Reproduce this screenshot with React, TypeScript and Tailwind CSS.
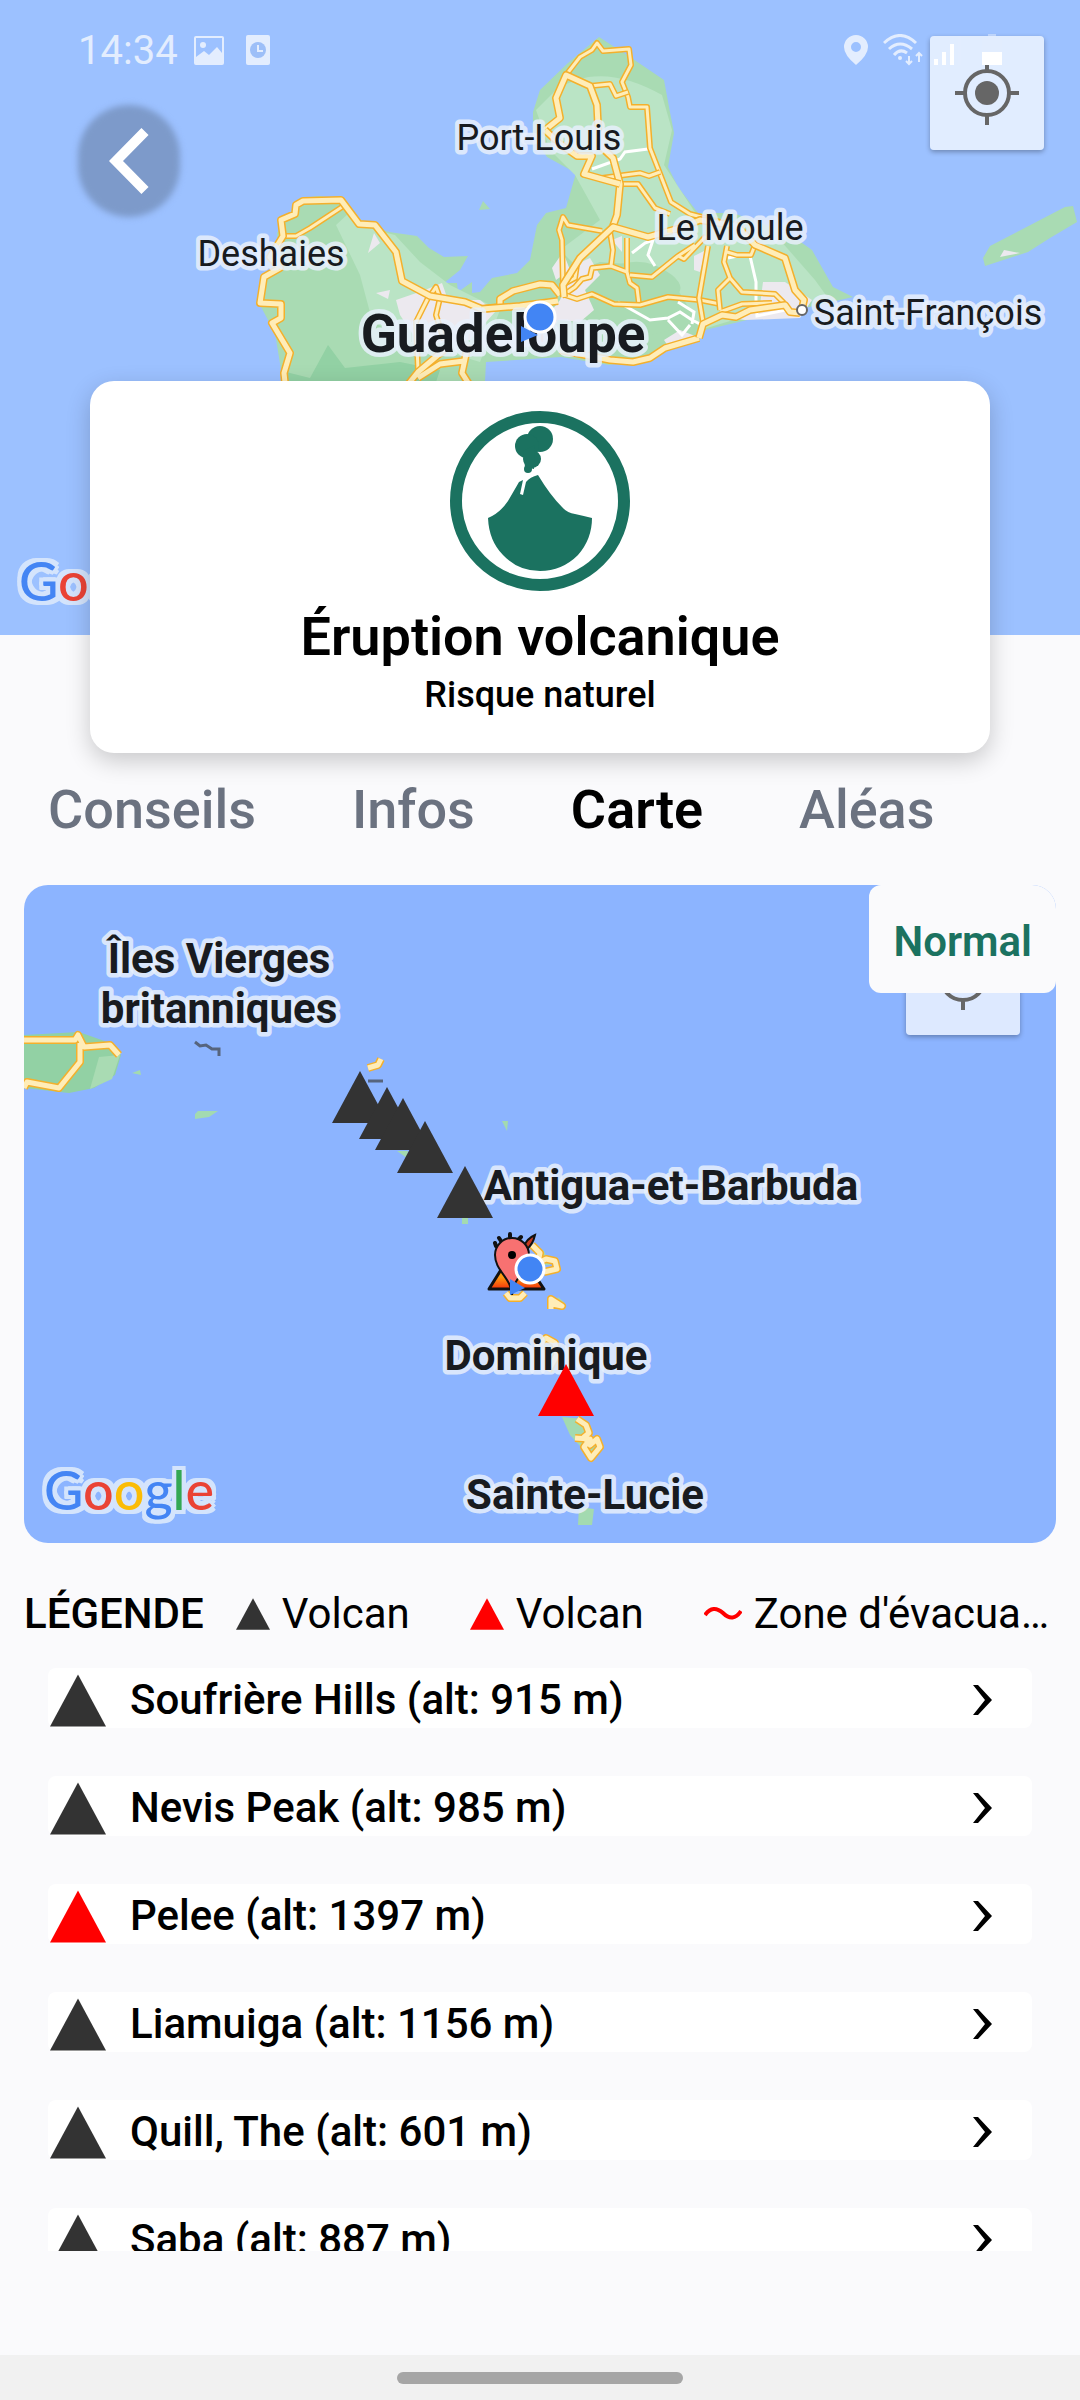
import type { ReactNode } from 'react'
import clsx from 'clsx'

type Volcano = {
  name: string
  alt: number
  active?: boolean
}

const volcanoes: Volcano[] = [
  { name: 'Soufrière Hills', alt: 915 },
  { name: 'Nevis Peak', alt: 985 },
  { name: 'Pelee', alt: 1397, active: true },
  { name: 'Liamuiga', alt: 1156 },
  { name: 'Quill, The', alt: 601 },
  { name: 'Saba', alt: 887 },
]

const tabs = ['Conseils', 'Infos', 'Carte', 'Aléas']

// main roads of Guadeloupe
const mainRoads = [
  'M286 392 L284 373 L290 353 L272 323 L281 318 L281 304 L260 303 L264 277 L280 268 L270 257 L283 236 L281 220 L295 214 L296 205 L303 201 L341 200 L359 224 L375 225 L396 252 L402 281 L430 296 L465 302 L482 309 L500 307 L500 299 L513 291 L540 284 L552 285 L560 295',
  'M402 392 L418 372 L444 350 M418 378 L440 364 L464 361 M468 345 L462 373 L474 392',
  'M482 309 L520 306 L558 301',
  'M545 130 L560 118 L556 98 L566 75 L590 86 L597 105 L599 145 L613 158 L620 184 L617 215 L613 226',
  'M545 130 L560 144 L577 156 L592 156 L584 174 L620 184',
  'M564 297 L563 285 L580 258 L613 227 L648 237 L680 228 L700 220 L737 226 L755 245 L785 258 L795 290 L804 300 L801 313',
  'M699 338 L665 348 L650 358 L633 362 L610 360 L560 350',
  'M699 338 L703 324 L722 315 L736 317 L750 310 L785 305 L790 312 L800 313',
]

const minorRoads = [
  'M284 236 L296 236 L310 228 L345 205',
  'M430 296 L436 287 L440 298 L436 315 L444 340 M428 298 L416 322 L418 370',
  'M566 75 L580 57 L592 50 L597 43 L603 51 L629 49 L631 65 L622 82 L628 97 L630 107 L647 107 L650 148 L671 202 L690 214 L720 222',
  'M590 86 L610 84 L616 96 L628 92',
  'M620 184 L638 184 L655 208 L670 214',
  'M602 178 L640 173 L649 176 L660 172',
  'M563 285 L562 240 L559 230 L563 217 L568 225 L602 231',
  'M562 285 L575 278 L577 264 M562 296 L575 287 L582 279 L590 277 L592 268 L611 266 L613 250 L610 232 M611 266 L627 272 L627 238 M627 272 L630 283 L637 288 L639 304',
  'M630 275 L652 277 L678 256 L684 259 L706 236 M678 256 L695 245',
  'M562 294 L577 299 L592 294 L614 304 L640 305 L668 297 L700 300 L720 304',
  'M708 246 L699 298 L703 322',
  'M727 246 L724 262 L730 278 L718 290 L720 310 M730 278 L742 292 L775 294 L784 303 M727 252 L737 255 L751 255 L755 245 M720 312 L742 304 L772 303',
]

const islandRoads = [
  'M0 155 L51 155 L54 150 L60 162 L86 160 L95 170 M56 158 L56 177 L35 203 L3 197 L0 203',
  'M344 183 L354 180 L357 174',
  'M508 360 L516 368 L514 378 L522 374 L531 376 L533 384 L520 387',
  'M482 408 L486 413 L496 413 L501 408',
  'M527 424 L527 414 L538 421 L528 419',
  'M512 462 L522 453 L531 458 L533 470 L524 486',
  'M553 534 L562 540 L565 548 L560 552 L566 560 L573 554 L576 562 L567 573 L560 562 L566 554 L551 553',
]

const Road = ({ d, width = 7 }: { d: string; width?: number }) => (
  <g fill="none" strokeLinejoin="round">
    <path d={d} stroke="#f4b02c" strokeWidth={width} />
    <path d={d} stroke="#ffedb8" strokeWidth={width - 3} />
  </g>
)

type LabelProps = {
  x: number
  y: number
  bold?: boolean
  size?: number
  children: ReactNode
}

const Label = ({ x, y, bold, size = 36, children }: LabelProps) => (
  <text
    x={x}
    y={y}
    textAnchor="middle"
    fontSize={size}
    fontWeight={bold ? 700 : 400}
    fill="#181b20"
    stroke="#e8f0fc"
    strokeOpacity="0.85"
    strokeWidth="9"
    strokeLinejoin="round"
    paintOrder="stroke"
  >
    {children}
  </text>
)

const Triangle = ({ active, className }: { active?: boolean; className?: string }) => (
  <svg viewBox="0 0 56 52" className={clsx('shrink-0', className)} aria-hidden="true">
    <path d="M28 0 L56 52 H0 Z" fill={active ? '#ff0000' : '#333333'} />
  </svg>
)

const GoogleLogo = ({ className }: { className?: string }) => (
  <div
    className={clsx(
      'absolute font-["Lato","Open_Sans",sans-serif] text-[54px] font-medium leading-[64px]',
      '[filter:drop-shadow(4px_0_0_#d4e4fc)_drop-shadow(-4px_0_0_#d4e4fc)_drop-shadow(0_4px_0_#d4e4fc)_drop-shadow(0_-4px_0_#d4e4fc)]',
      className
    )}
  >
    <span className="text-[#4485f4]">G</span>
    <span className="text-[#ea4335]">o</span>
    <span className="text-[#fbbc05]">o</span>
    <span className="text-[#4485f4]">g</span>
    <span className="text-[#34a853]">l</span>
    <span className="text-[#ea4335]">e</span>
  </div>
)

const LocateButton = ({ className }: { className?: string }) => (
  <button
    type="button"
    aria-label="Ma position"
    className={clsx(
      'absolute flex h-[114px] w-[114px] items-center justify-center rounded bg-white/70 shadow-[0_2px_5px_rgba(0,0,0,0.3)]',
      className
    )}
  >
    <svg viewBox="0 0 64 64" className="h-16 w-16" fill="none" stroke="#666" strokeWidth="4">
      <circle cx="32" cy="32" r="22" />
      <circle cx="32" cy="32" r="12" fill="#666" stroke="none" />
      <path d="M32 0 V10 M32 54 V64 M0 32 H10 M54 32 H64" />
    </svg>
  </button>
)

const StatusBar = () => (
  <div className="absolute inset-x-0 top-0 flex h-[100px] items-center justify-between pl-[78px] pr-[78px] text-[#e3edfe]">
    <div className="flex items-center">
      <span className="pt-[2px] text-[40px] leading-[48px]">14:34</span>
      <svg viewBox="0 0 30 29" className="ml-4 h-[29px] w-[30px]" fill="currentColor">
        <path
          fillRule="evenodd"
          d="M2 0 H28 Q30 0 30 2 V27 Q30 29 28 29 H2 Q0 29 0 27 V2 Q0 0 2 0 Z M2 2 V21 L10 15 L15 19 L23 11 L28 17 V2 Z"
        />
        <circle cx="9" cy="9" r="3" />
      </svg>
      <svg viewBox="0 0 24 30" className="ml-[22px] h-[30px] w-6">
        <rect width="24" height="30" rx="2" fill="currentColor" />
        <circle cx="12" cy="15" r="8" fill="#9dbff8" />
        <path d="M12 10 V16 H17" stroke="currentColor" strokeWidth="2" fill="none" />
      </svg>
    </div>
    <div className="flex items-center">
      <svg viewBox="0 0 24 30" className="h-[30px] w-6" fill="currentColor">
        <path fillRule="evenodd" d="M12 0 A12 12 0 0 1 24 12 Q24 20 12 30 Q0 20 0 12 A12 12 0 0 1 12 0 Z M12 7 A5 5 0 1 0 12 17 A5 5 0 1 0 12 7 Z" />
      </svg>
      <svg viewBox="0 0 40 32" className="ml-[15px] h-8 w-10" fill="none" stroke="currentColor" strokeWidth="3">
        <path d="M1 9 Q17 -6 33 9 M6 15 Q17 5 29 15 M11 21 Q17 14 24 19" />
        <circle cx="17" cy="24" r="2" fill="currentColor" stroke="none" />
        <path d="M26 22 V30 M23 27 L26 30 L29 27 M36 28 V19 M33 22 L36 19 L39 22" strokeWidth="2" />
      </svg>
      <svg viewBox="0 0 28 30" className="ml-[11px] h-[30px] w-7" fill="currentColor">
        <path d="M0 24 h4 v6 h-4z M8 17 h4 v13 h-4z M16 9 h4 v21 h-4z" className="fill-white" />
        <path d="M24 1 h3 v29 h-3z" opacity="0.4" />
      </svg>
      <svg viewBox="0 0 20 32" className="ml-[20px] h-8 w-5" fill="currentColor">
        <path d="M6 0 h8 v4 h6 v14 h-20 v-14 h6z" opacity="0.5" />
        <path d="M0 18 h20 v13 h-20z" className="fill-white" />
      </svg>
    </div>
  </div>
)

const HeaderMap = () => (
  <header className="relative h-[635px] shrink-0 overflow-hidden bg-[#9cc1ff]">
    <svg viewBox="0 0 1080 635" preserveAspectRatio="xMidYMid slice" className="h-full w-full">
      <path
        fill="#a9dbb3"
        d="M300 198 L320 196 L341 200 L358 222 L389 232 L417 236 L429 248 L444 257 L468 256 L460 270 L444 283 L457 283 L458 292 L472 282 L472 293 L480 292 L492 278 L517 273 L530 260 L537 225 L546 213 L566 208 L576 173 L547 157 L533 135 L533 112 L540 90 L568 63 L599 37 L630 57 L664 80 L669 107 L674 133 L668 167 L678 187 L698 213 L733 213 L788 233 L812 250 L833 287 L853 297 L809 307 L747 320 L705 330 L698 340 L654 352 L633 360 L609 365 L561 357 L486 362 L484 400 H286 L275 333 L260 305 L267 277 L279 253 L277 233 Z"
      />
      <path
        fill="#bae4c5"
        d="M336 225 L350 212 L375 230 L395 235 L420 262 L450 285 L500 310 L480 362 L440 350 L400 340 L372 320 L360 275 Z M556 90 Q600 60 662 95 L672 130 L664 165 L700 220 L780 240 L815 280 L828 298 L740 318 L700 330 L690 310 L672 280 L640 265 L600 262 L580 270 L560 250 L600 220 L575 175 L550 150 L536 110 Z"
      />
      <path fill="#a9dbb3" d="M602 272 Q640 250 672 275 Q690 290 670 300 L690 325 L650 335 L600 310 L580 300 Z" />
      <path fill="#92d1a4" d="M328 345 L345 368 L400 362 L440 370 L430 400 H284 L286 372 L310 378 Z" />
      <path
        fill="#ece9ef"
        d="M374 233 L368 253 L380 243 Z M376 293 L390 290 L388 299 Z M396 300 L425 290 L442 283 L448 300 L480 300 L495 312 L470 340 L420 345 L400 315 Z M575 265 L590 258 L600 275 L585 290 L594 310 L580 322 L558 320 L545 345 L500 350 L490 340 L540 325 L560 300 Z M552 268 L563 252 L570 270 L556 280 Z M694 256 L706 250 L700 272 L694 270 Z M763 282 L785 282 L812 300 L800 318 L745 320 L730 318 L760 305 Z M612 240 L622 236 L622 252 Z M664 340 L680 330 L695 336 L668 346 Z"
      />
      <path d="M479 210 L483 201 L490 209 Z" fill="#a9dbb3" />
      <path d="M983 258 L990 246 L1065 207 L1073 206 L1077 222 L1050 238 L1028 252 L985 266 Z" fill="#a9dbb3" />
      <path d="M1000 257 L1004 250 L1020 253 Z" fill="#ece9ef" />
      <g fill="none" stroke="#ffffff" strokeWidth="3">
        <path d="M592 169 L620 159 L625 152 L648 149 M632 253 L645 243 L653 240 L648 255 L655 266 M750 256 L756 282 L756 300 L757 316 L790 309" />
        <path d="M618 302 L650 320 L668 318 L680 312 L692 320 L700 324 M668 320 L682 335 L690 325 M678 302 L694 312 L692 324 M728 258 L742 255" />
      </g>
      {minorRoads.map((d) => (
        <Road key={d} d={d} width={6} />
      ))}
      {mainRoads.map((d) => (
        <Road key={d} d={d} width={8} />
      ))}
      <circle cx="802" cy="310" r="5" fill="#fff" stroke="#666" strokeWidth="2" />
      <Label x={539} y={150}>Port-Louis</Label>
      <Label x={271} y={266}>Deshaies</Label>
      <Label x={730} y={240}>Le Moule</Label>
      <Label x={928} y={325}>Saint-François</Label>
      <Label x={503} y={352} bold size={53}>Guadeloupe</Label>
      <path d="M521 326 V342 L538 335 Z" fill="#4285f4" />
      <circle cx="540" cy="317" r="15" fill="#4285f4" stroke="#fff" strokeWidth="3" />
    </svg>
    <GoogleLogo className="left-[19px] top-[549px]" />
    <LocateButton className="right-9 top-9" />
    <StatusBar />
    <button
      type="button"
      aria-label="Retour"
      className="absolute left-[76px] top-[103px] flex h-[116px] w-[106px] items-center justify-center"
    >
      <span className="absolute inset-[2px] rounded-full bg-[#7d9aca] blur-[3px]" />
      <svg viewBox="0 0 40 66" className="relative h-[66px] w-10" fill="none" stroke="#fff" strokeWidth="10">
        <path d="M36 3.500 L7 33 L36 62.500" />
      </svg>
    </button>
  </header>
)

const VolcanoLogo = () => (
  <svg viewBox="0 0 180 180" className="h-[180px] w-[180px]" fill="#1b7260" aria-hidden="true">
    <circle cx="90" cy="90" r="84" fill="none" stroke="#1b7260" strokeWidth="12" />
    <circle cx="90" cy="28" r="13" />
    <circle cx="77" cy="35" r="12" />
    <circle cx="82" cy="48" r="9" />
    <circle cx="78" cy="58" r="4" />
    <path d="M73 40 L85 34 L84 58 L75 56 Z" />
    <path d="M88 64 Q100 84 112 96 Q117 102 125 103 Q134 105 142 107 Q142 128 128 144 Q112 160 90 160 Q68 160 53 144 Q39 130 38 107 Q50 102 58 90 Q65 78 69 71 L73 69 L70 83 L73 84 L76 71 Q80 66 88 64 Z" />
  </svg>
)

const HazardCard = () => (
  <section className="relative mx-[90px] -mt-[254px] flex h-[372px] shrink-0 flex-col items-center rounded-3xl bg-white pt-[30px] shadow-[0_8px_24px_rgba(0,0,0,0.2)]">
    <VolcanoLogo />
    <h1 className="mt-4 text-[54px] font-semibold leading-[60px]">Éruption volcanique</h1>
    <p className="mt-1 text-[36px] font-medium leading-[48px]">Risque naturel</p>
  </section>
)

const Marker = ({ x, y, active }: { x: number; y: number; active?: boolean }) => (
  <path d="M28 0 L56 52 H0 Z" fill={active ? '#ff0000' : '#333'} transform={`translate(${x - 28} ${y})`} />
)

const VolcanoMap = () => (
  <section className="relative mx-6 mt-10 h-[658px] shrink-0 overflow-hidden rounded-3xl bg-[#8cb4ff]">
    <svg viewBox="0 0 1032 658" preserveAspectRatio="xMidYMid slice" className="h-full w-full">
      <path d="M0 150 L55 147 L86 158 L97 170 L91 190 L70 203 L45 208 L0 203 Z" fill="#92d1a4" />
      <path d="M75 172 L96 170 L88 194 L66 204 Z" fill="#a9dbb3" />
      <path
        fill="#a3dab0"
        d="M108 188 L116 185 L117 190 Z M171 229 L174 226 L194 226 L185 232 L171 234 Z M478 236 L484 236 L483 246 Z M373 266 L384 266 L383 273 Z M438 333 H444 V339 H438 Z M512 360 L520 366 L526 380 L510 380 Z M534 412 L541 418 L530 424 Z M538 532 L560 534 L572 560 L566 572 L546 550 Z M514 458 L532 462 L530 488 L520 484 Z M555 622 L570 624 L568 640 L554 640 Z"
      />
      <g fill="none" stroke="#56647d" strokeWidth="3">
        <path d="M171 157 L176 161 L182 160 L188 164 L195 164 V171 M344 196 H359" />
      </g>
      {islandRoads.map((d) => (
        <Road key={d} d={d} width={8} />
      ))}
      <Label x={195} y={88} bold size={42}>Îles Vierges</Label>
      <Label x={195} y={138} bold size={42}>britanniques</Label>
      <Label x={647} y={315} bold size={42}>Antigua-et-Barbuda</Label>
      <Label x={522} y={485} bold size={42}>Dominique</Label>
      <Label x={561} y={624} bold size={42}>Sainte-Lucie</Label>
      <Marker x={336} y={186} />
      <Marker x={363} y={202} />
      <Marker x={379} y={213} />
      <Marker x={401} y={236} />
      <Marker x={441} y={281} />
      <Marker x={542} y={479} active />
      <defs>
        <linearGradient id="lava" x1="0" y1="0" x2="0" y2="1">
          <stop offset="0.5" stopColor="#ff9a10" />
          <stop offset="1" stopColor="#f2330c" />
        </linearGradient>
      </defs>
      <path d="M465 404 L480 380 L504 380 L520 404 Z" fill="url(#lava)" stroke="#111" strokeWidth="3" strokeLinejoin="round" />
      <path d="M500 362 Q502 354 511 350 Q509 359 503 364 Z" fill="#c63a20" stroke="#111" strokeWidth="2" />
      <path d="M472 361 L471 358 M477 356 L475 353 M486 352 L486 349 M495 354 L497 352" stroke="#111" strokeWidth="4" strokeLinecap="round" />
      <path d="M488 410 C487 392 471 386 471 370 A17 17 0 0 1 505 370 C505 386 489 392 488 410 Z" fill="#f87171" stroke="#111" strokeWidth="2" />
      <circle cx="488" cy="370" r="4" fill="#000" />
      <path d="M486 394 V410 L501 403 Z" fill="#4285f4" />
      <circle cx="506" cy="384" r="14" fill="#4285f4" stroke="#fff" strokeWidth="3" />
    </svg>
    <GoogleLogo className="left-[20px] top-[573px]" />
    <LocateButton className="right-9 top-9" />
    <button
      type="button"
      className="absolute right-0 top-0 h-[108px] rounded-xl bg-[#fafafc] px-6 pt-1 text-[42px] font-semibold text-[#1b7260]"
    >
      Normal
    </button>
  </section>
)

const Legend = () => (
  <div className="flex h-[125px] shrink-0 items-center px-6 pt-4 text-[42px] leading-[48px]">
    <span className="font-medium">LÉGENDE</span>
    <ul className="flex min-w-0 flex-1 items-center">
      <li className="ml-8 flex items-center gap-3">
        <Triangle className="h-8 w-[34px]" />
        Volcan
      </li>
      <li className="ml-[60px] flex items-center gap-3">
        <Triangle active className="h-8 w-[34px]" />
        Volcan
      </li>
      <li className="ml-[60px] flex min-w-0 items-center gap-3">
        <svg viewBox="0 0 38 16" className="h-4 w-[38px] shrink-0" fill="none" stroke="#f00" strokeWidth="4">
          <path d="M1 9 Q9 -2 19 7 Q29 17 37 5" />
        </svg>
        <span className="truncate">Zone d'évacuation</span>
      </li>
    </ul>
  </div>
)

const VolcanoRow = ({ name, alt, active }: Volcano) => (
  <li>
    <a href={`#${name}`} className="flex h-[60px] items-center rounded-lg bg-white pl-[2px] pr-10">
      <Triangle active={active} className="mt-1 h-[53px] w-14" />
      <span className="ml-6 mt-1 flex-1 text-[42px] font-medium leading-[48px]">
        {`${name} (alt: ${alt} m)`}
      </span>
      <svg viewBox="0 0 20 30" className="mt-1 h-[30px] w-5" aria-hidden="true">
        <path d="M1 0 H6 L20 15 L6 30 H1 L13 15 Z" />
      </svg>
    </a>
  </li>
)

const App: React.FC = () => {
  return (
    <div className="flex h-screen flex-col bg-[#fafafc] font-[Roboto,sans-serif] text-black">
      <HeaderMap />
      <HazardCard />
      <nav className="flex shrink-0 gap-24 px-12 pt-[22px]">
        {tabs.map((tab) => (
          <button
            key={tab}
            type="button"
            className={clsx(
              'text-[54px] leading-[70px]',
              tab === 'Carte' ? 'font-semibold' : 'font-medium text-[#6b7280]'
            )}
          >
            {tab}
          </button>
        ))}
      </nav>
      <VolcanoMap />
      <Legend />
      <ul className="mx-12 flex min-h-0 flex-1 flex-col gap-12 overflow-y-auto [scrollbar-width:none]">
        {volcanoes.map((volcano) => (
          <VolcanoRow key={volcano.name} {...volcano} />
        ))}
      </ul>
      <footer className="mt-[104px] flex h-[45px] shrink-0 items-center justify-center bg-[#f1f1f1]">
        <div className="h-3 w-[286px] rounded-full bg-[#a6a6a6]" />
      </footer>
    </div>
  )
}

export default App
